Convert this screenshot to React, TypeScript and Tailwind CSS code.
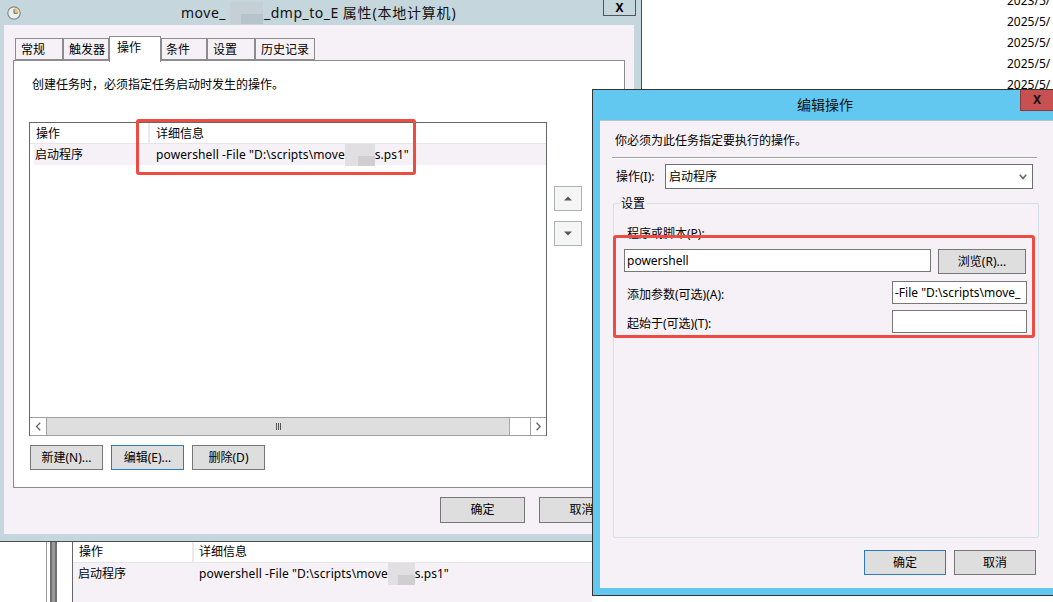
import React from "react";

const FONT = "[font-family:'Noto_Sans','Noto_Sans_CJK_SC',sans-serif]";

function Btn({ w, h, label, blue }: { w: string; h: string; label: string; blue?: boolean }) {
  return (
    <div className={`${w} ${h} shrink-0 flex items-center justify-center bg-[#dedede] border text-[12px] text-black ${blue ? "border-[#2f7ab8]" : "border-[#777777]"}`}>
      {label}
    </div>
  );
}

function Tab({ label, w, pl, active }: { label: string; w: string; pl: string; active?: boolean }) {
  return active ? (
    <div className={`${w} ${pl} h-[26px] relative z-10 bg-white border border-b-0 border-[#8c8c8c] flex items-start pt-[2px] text-[12px]`}>{label}</div>
  ) : (
    <div className={`${w} ${pl} h-[22px] mt-[2px] bg-[#f5f1f6] border border-[#8c8c8c] flex items-center pt-[1px] text-[12px]`}>{label}</div>
  );
}

function Smudge({ w }: { w: string }) {
  return (
    <span className={`${w} h-[22px] inline-block relative bg-[#e2dfe3]`}>
      <span className="absolute right-0 bottom-0 w-[17px] h-[10px] bg-[#d1ced2]" />
    </span>
  );
}

function Detail({ gap }: { gap: string }) {
  return (
    <span className="whitespace-nowrap flex items-center">
      <span className="tracking-[0.12px]">powershell -File "D:\scripts\move</span>
      <Smudge w={gap} />
      s.ps1"
    </span>
  );
}

function Clock() {
  return (
    <svg width="14" height="14" viewBox="0 0 14 14" className="shrink-0">
      <circle cx="7" cy="7" r="6.2" fill="#eef0ee" stroke="#85898a" strokeWidth="1.2" />
      <path d="M7 2.2A4.8 4.8 0 0 1 11.8 7H7Z" fill="#f0c56e" />
      <path d="M7 3V7.3H10.6" fill="none" stroke="#5f6f78" strokeWidth="1" />
    </svg>
  );
}

function Tri({ up }: { up?: boolean }) {
  return (
    <svg width="8" height="5" viewBox="0 0 8 5">
      <path d={up ? "M4 0.5 8 4.5H0Z" : "M0 0.5H8L4 4.5Z"} fill="#555555" />
    </svg>
  );
}

function OrderBtn({ up, cls }: { up?: boolean; cls: string }) {
  return (
    <div className={`w-[28px] h-[25px] bg-[#f5f5f5] border border-[#adb3b5] flex items-center justify-center ${cls}`}>
      <Tri up={up} />
    </div>
  );
}

function Chev({ right }: { right?: boolean }) {
  return (
    <svg width="7" height="9" viewBox="0 0 7 9">
      <path d={right ? "M1.5 0.8 5.2 4.5 1.5 8.2" : "M5.2 0.8 1.5 4.5 5.2 8.2"} fill="none" stroke="#666666" strokeWidth="1.3" />
    </svg>
  );
}

function RedBox({ cls }: { cls: string }) {
  return <div className={`absolute border-[3px] border-[#ee4b42] rounded-[3px] z-30 ${cls}`} />;
}

const dates = ["2023/5/", "2025/5/", "2025/5/", "2025/5/", "2025/5/"];

export default function App() {
  return (
    <div className={`relative w-[1053px] h-[602px] overflow-hidden bg-white text-black text-[12px] ${FONT}`}>
      {/* dates column of the window behind */}
      <div className="absolute left-[1007px] top-[-10px] flex flex-col w-[46px] overflow-hidden">
        {dates.map((d, i) => (
          <div key={i} className="h-[21px] leading-[21px] whitespace-nowrap">{d}</div>
        ))}
      </div>

      {/* window behind, lower left */}
      <div className="absolute left-[46px] top-[542px] w-[546px] h-[60px] flex">
        <div className="w-[1px] bg-[#9a9a9a]" />
        <div className="w-[3px]" />
        <div className="w-[7px] bg-[#999999] border-x-2 border-[#707070]" />
        <div className="w-[15px]" />
        <div className="w-[1px] bg-[#666666]" />
        <div className="flex-1 flex flex-col">
          <div className="h-[21px] flex items-center border-b border-[#e8e4e8] bg-white">
            <div className="w-[121px] h-full pl-[6px] flex items-center border-r-2 border-[#ece8ec]">操作</div>
            <div className="pl-[5px]">详细信息</div>
          </div>
          <div className="flex-1 flex items-start bg-[#f5f1f6]">
            <div className="w-[119px] pl-[5px] pt-[3px] leading-[16px]">启动程序</div>
            <div className="pl-[7px] h-[22px] flex"><Detail gap="w-[27px]" /></div>
          </div>
        </div>
      </div>

      {/* properties window */}
      <div className="absolute left-0 top-0 w-[642px] h-[542px] z-10 bg-[#c6d6dd] border-r border-b border-[#4d4d4d] flex flex-col">
        <div className="h-[25px] relative flex items-center pl-[7px]">
          <Clock />
          <div className="ml-[160px] flex items-center text-[14px] tracking-[0.5px] whitespace-nowrap text-[#111]">
            <span className="w-[49px]">move_</span>
            <span className="w-[33px] h-[22px] inline-block relative bg-[#c4d0d6]">
              <span className="absolute right-0 bottom-0 w-[22px] h-[10px] bg-[#b6c5cb]" />
            </span>
            <span className="ml-[1px]">_dmp_to_E</span>
            <span className="ml-[4px] tracking-[0.8px]">属性(本地计算机)</span>
          </div>
          <div className="absolute left-[603px] top-0 w-[33px] h-[16px] bg-[#c6d6dd] border border-t-0 border-[#555555] flex items-center justify-center text-[12px] font-bold leading-none">
            X
          </div>
        </div>
        <div className="ml-[4px] w-[630px] h-[509px] bg-[#f5f1f6] flex flex-col">
          <div className="mt-[11px] ml-[11px] h-[26px] -mb-[2px] flex items-start">
            <Tab label="常规" w="w-[48px]" pl="pl-[5px]" />
            <Tab label="触发器" w="w-[46px]" pl="pl-[5px]" />
            <Tab label="操作" w="w-[52px]" pl="pl-[7px]" active />
            <Tab label="条件" w="w-[46px]" pl="pl-[4px]" />
            <Tab label="设置" w="w-[48px]" pl="pl-[5px]" />
            <Tab label="历史记录" w="w-[60px]" pl="pl-[5px]" />
          </div>
          <div className="ml-[9px] w-[612px] h-[428px] bg-white border border-[#8c8c8c] flex flex-col">
            <div className="pt-[16px] ml-[18px] leading-[16px]">创建任务时，必须指定任务启动时发生的操作。</div>
            <div className="mt-[29px] flex">
              <div className="ml-[15px] w-[518px] h-[314px] border border-[#666666] flex flex-col">
                <div className="h-[21px] flex border-b border-[#e8e4e8] bg-white">
                  <div className="w-[120px] pl-[6px] pt-[1px] flex items-center border-r-2 border-[#ece8ec]">操作</div>
                  <div className="pl-[6px] pt-[1px] flex items-center">详细信息</div>
                </div>
                <div className="h-[21px] ml-[4px] flex items-center bg-[#f5f1f6]">
                  <div className="w-[116px] pl-[1px]">启动程序</div>
                  <div className="pl-[6px]"><Detail gap="w-[30px]" /></div>
                </div>
                <div className="flex-1" />
                <div className="h-[17px] flex border-y border-[#a0a0a0] box-content -mb-px">
                  <div className="w-[17px] flex items-center justify-center border-r border-[#a0a0a0]"><Chev /></div>
                  <div className="w-[463px] bg-[#dedede] border-r border-[#a8a8a8] flex items-center justify-center gap-[1px]">
                    <span className="w-[1px] h-[7px] bg-[#555]" /><span className="w-[1px] h-[7px] bg-[#555]" /><span className="w-[1px] h-[7px] bg-[#555]" />
                  </div>
                  <div className="w-[20px]" />
                  <div className="flex-1 flex items-center justify-center border-l border-[#a0a0a0]"><Chev right /></div>
                </div>
              </div>
              <div className="ml-[7px] flex flex-col">
                <OrderBtn up cls="mt-[64px]" />
                <OrderBtn cls="mt-[10px]" />
              </div>
            </div>
            <div className="mt-[9px] ml-[16px] flex gap-[8px]">
              <Btn w="w-[73px]" h="h-[25px]" label="新建(N)..." />
              <Btn w="w-[73px]" h="h-[25px]" label="编辑(E)..." blue />
              <Btn w="w-[73px]" h="h-[25px]" label="删除(D)" />
            </div>
          </div>
          <div className="mt-[9px] ml-[436px] flex gap-[14px]">
            <Btn w="w-[85px]" h="h-[26px]" label="确定" />
            <Btn w="w-[85px]" h="h-[26px]" label="取消" />
          </div>
        </div>
      </div>

      {/* edit action dialog */}
      <div className="absolute left-[592px] top-[89px] w-[470px] h-[507px] z-20 bg-[#62c8f0] border border-[#333333] flex flex-col">
        <div className="h-[30px] shrink-0 relative flex items-center justify-center pr-[4px] pb-[1px] text-[14px] text-[#111]">
          编辑操作
          <div className="absolute left-[427px] top-0 w-[34px] h-[21px] bg-[#c75050] border-l border-b border-[#8a3a3a] flex items-center justify-center text-[12px] font-bold leading-none pr-[1px]">
            X
          </div>
        </div>
        <div className="ml-[7px] h-[468px] bg-[#f5f1f6] border-t border-[#b5c5cc] flex flex-col">
          <div className="mt-[12px] ml-[15px] leading-[16px]">你必须为此任务指定要执行的操作。</div>
          <div className="mt-[8px] ml-[12px] w-[425px] h-[2px] border-t border-[#a0a0a0] border-b-white border-b" />
          <div className="mt-[5px] ml-[16px] flex items-center">
            <div className="w-[49px]">操作(I):</div>
            <div className="w-[368px] h-[25px] bg-white border border-[#6f6f6f] flex items-center justify-between pl-[3px] pr-[5px]">
              启动程序
              <svg width="8" height="6" viewBox="0 0 8 6"><path d="M0.8 0.8 4 4.6 7.2 0.8" fill="none" stroke="#666666" strokeWidth="1.6" /></svg>
            </div>
          </div>
          <div className="mt-[14px] ml-[13px] w-[426px] h-[335px] border border-[#d5dfe6] rounded-[2px] flex flex-col">
            <div className="-mt-[8px] ml-[6px] w-fit px-[1px] bg-[#f5f1f6] leading-[16px]">设置</div>
            <div className="mt-[14px] ml-[13px] leading-[16px]">程序或脚本(P):</div>
            <div className="mt-[7px] ml-[10px] flex items-start">
              <div className="w-[307px] h-[23px] bg-white border border-[#777777] flex items-center pl-[2px] text-[12px] whitespace-nowrap">powershell</div>
              <div className="ml-[7px]"><Btn w="w-[88px]" h="h-[25px]" label="浏览(R)..." /></div>
            </div>
            <div className="mt-[7px] flex justify-between items-start pl-[13px] pr-[11px]">
              <div className="mt-[6px] leading-[16px]">添加参数(可选)(A):</div>
              <div className="w-[135px] h-[23px] bg-white border border-[#777777] flex items-center pl-[2px] overflow-hidden whitespace-nowrap">-File "D:\scripts\move_</div>
            </div>
            <div className="mt-[6px] flex justify-between items-start pl-[13px] pr-[11px]">
              <div className="mt-[6px] leading-[16px]">起始于(可选)(T):</div>
              <div className="w-[135px] h-[23px] bg-white border border-[#777777]" />
            </div>
          </div>
          <div className="mt-[12px] ml-[264px] flex gap-[8px]">
            <Btn w="w-[82px]" h="h-[25px]" label="确定" blue />
            <Btn w="w-[82px]" h="h-[25px]" label="取消" />
          </div>
        </div>
      </div>

      <RedBox cls="left-[136px] top-[119px] w-[280px] h-[56px]" />
      <RedBox cls="left-[613px] top-[235px] w-[422px] h-[103px]" />
    </div>
  );
}
